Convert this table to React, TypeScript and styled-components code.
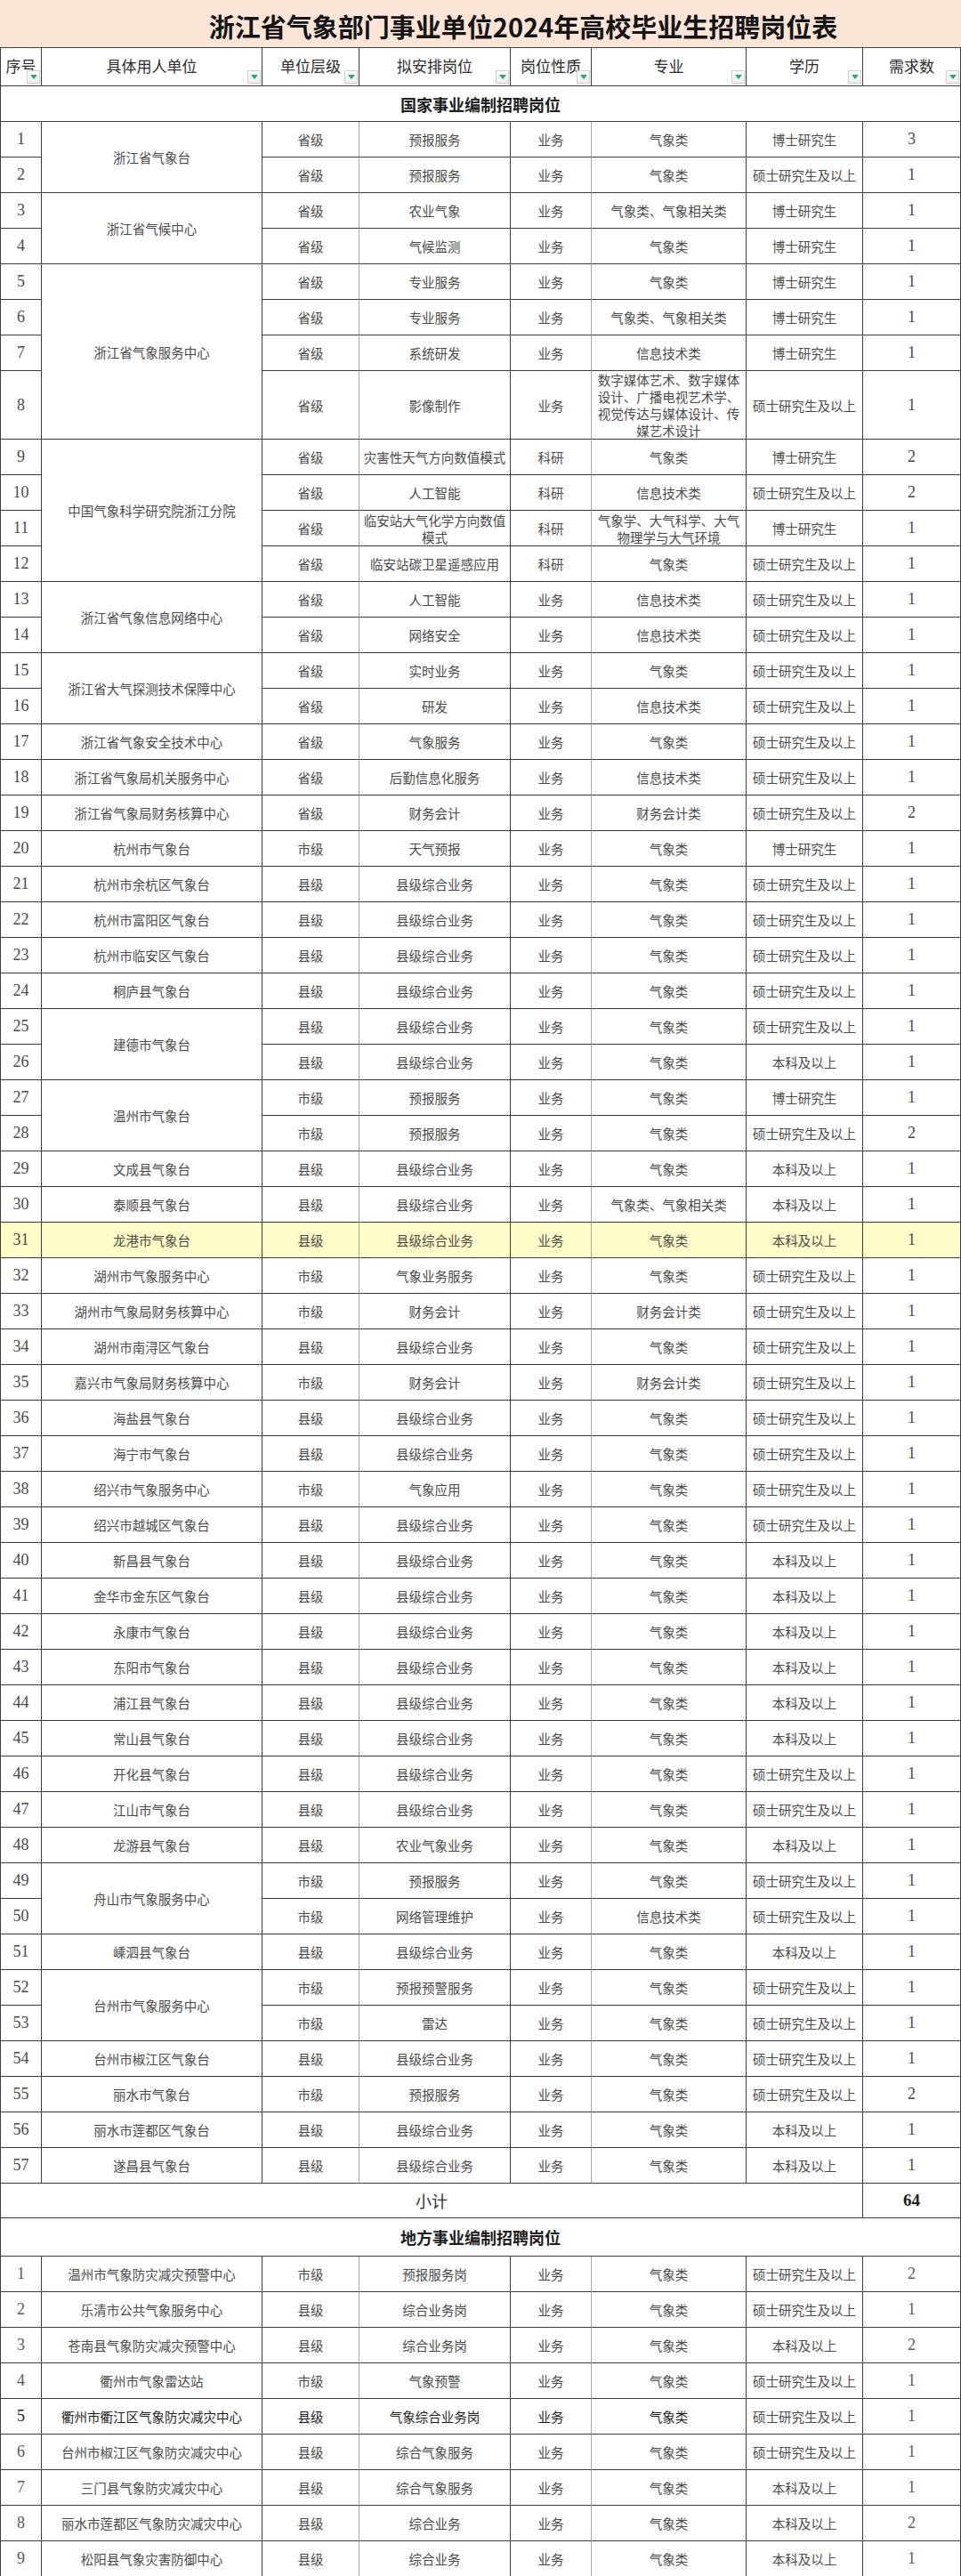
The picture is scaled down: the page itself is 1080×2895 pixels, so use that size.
import React from "react";
import styled, { createGlobalStyle } from "styled-components";

const GlobalStyle = createGlobalStyle`
  html, body { margin: 0; padding: 0; background: #ffffff; }
  body { font-family: "Noto Sans CJK SC", "Noto Sans", sans-serif; }
`;

type Row = {
  no: number;
  unit?: string;
  span?: number;
  level: string;
  post: string;
  nature: string;
  major: string;
  edu: string;
  count: number;
  tall?: boolean;
  highlight?: boolean;
  dark?: boolean;
};

const L = "省级";
const S = "市级";
const X = "县级";
const YW = "业务";
const KY = "科研";
const QX = "气象类";
const XX = "信息技术类";
const CW = "财务会计类";
const BS = "博士研究生";
const SS = "硕士研究生及以上";
const BK = "本科及以上";
const ZH = "县级综合业务";

const national: Row[] = [
  { no: 1, unit: "浙江省气象台", span: 2, level: L, post: "预报服务", nature: YW, major: QX, edu: BS, count: 3 },
  { no: 2, level: L, post: "预报服务", nature: YW, major: QX, edu: SS, count: 1 },
  { no: 3, unit: "浙江省气候中心", span: 2, level: L, post: "农业气象", nature: YW, major: "气象类、气象相关类", edu: BS, count: 1 },
  { no: 4, level: L, post: "气候监测", nature: YW, major: QX, edu: BS, count: 1 },
  { no: 5, unit: "浙江省气象服务中心", span: 4, level: L, post: "专业服务", nature: YW, major: QX, edu: BS, count: 1 },
  { no: 6, level: L, post: "专业服务", nature: YW, major: "气象类、气象相关类", edu: BS, count: 1 },
  { no: 7, level: L, post: "系统研发", nature: YW, major: XX, edu: BS, count: 1 },
  { no: 8, level: L, post: "影像制作", nature: YW, major: "数字媒体艺术、数字媒体设计、广播电视艺术学、视觉传达与媒体设计、传媒艺术设计", edu: SS, count: 1, tall: true },
  { no: 9, unit: "中国气象科学研究院浙江分院", span: 4, level: L, post: "灾害性天气方向数值模式", nature: KY, major: QX, edu: BS, count: 2 },
  { no: 10, level: L, post: "人工智能", nature: KY, major: XX, edu: SS, count: 2 },
  { no: 11, level: L, post: "临安站大气化学方向数值模式", nature: KY, major: "气象学、大气科学、大气物理学与大气环境", edu: BS, count: 1 },
  { no: 12, level: L, post: "临安站碳卫星遥感应用", nature: KY, major: QX, edu: SS, count: 1 },
  { no: 13, unit: "浙江省气象信息网络中心", span: 2, level: L, post: "人工智能", nature: YW, major: XX, edu: SS, count: 1 },
  { no: 14, level: L, post: "网络安全", nature: YW, major: XX, edu: SS, count: 1 },
  { no: 15, unit: "浙江省大气探测技术保障中心", span: 2, level: L, post: "实时业务", nature: YW, major: QX, edu: SS, count: 1 },
  { no: 16, level: L, post: "研发", nature: YW, major: XX, edu: SS, count: 1 },
  { no: 17, unit: "浙江省气象安全技术中心", level: L, post: "气象服务", nature: YW, major: QX, edu: SS, count: 1 },
  { no: 18, unit: "浙江省气象局机关服务中心", level: L, post: "后勤信息化服务", nature: YW, major: XX, edu: SS, count: 1 },
  { no: 19, unit: "浙江省气象局财务核算中心", level: L, post: "财务会计", nature: YW, major: CW, edu: SS, count: 2 },
  { no: 20, unit: "杭州市气象台", level: S, post: "天气预报", nature: YW, major: QX, edu: BS, count: 1 },
  { no: 21, unit: "杭州市余杭区气象台", level: X, post: ZH, nature: YW, major: QX, edu: SS, count: 1 },
  { no: 22, unit: "杭州市富阳区气象台", level: X, post: ZH, nature: YW, major: QX, edu: SS, count: 1 },
  { no: 23, unit: "杭州市临安区气象台", level: X, post: ZH, nature: YW, major: QX, edu: SS, count: 1 },
  { no: 24, unit: "桐庐县气象台", level: X, post: ZH, nature: YW, major: QX, edu: SS, count: 1 },
  { no: 25, unit: "建德市气象台", span: 2, level: X, post: ZH, nature: YW, major: QX, edu: SS, count: 1 },
  { no: 26, level: X, post: ZH, nature: YW, major: QX, edu: BK, count: 1 },
  { no: 27, unit: "温州市气象台", span: 2, level: S, post: "预报服务", nature: YW, major: QX, edu: BS, count: 1 },
  { no: 28, level: S, post: "预报服务", nature: YW, major: QX, edu: SS, count: 2 },
  { no: 29, unit: "文成县气象台", level: X, post: ZH, nature: YW, major: QX, edu: BK, count: 1 },
  { no: 30, unit: "泰顺县气象台", level: X, post: ZH, nature: YW, major: "气象类、气象相关类", edu: BK, count: 1 },
  { no: 31, unit: "龙港市气象台", level: X, post: ZH, nature: YW, major: QX, edu: BK, count: 1, highlight: true },
  { no: 32, unit: "湖州市气象服务中心", level: S, post: "气象业务服务", nature: YW, major: QX, edu: SS, count: 1 },
  { no: 33, unit: "湖州市气象局财务核算中心", level: S, post: "财务会计", nature: YW, major: CW, edu: SS, count: 1 },
  { no: 34, unit: "湖州市南浔区气象台", level: X, post: ZH, nature: YW, major: QX, edu: SS, count: 1 },
  { no: 35, unit: "嘉兴市气象局财务核算中心", level: S, post: "财务会计", nature: YW, major: CW, edu: SS, count: 1 },
  { no: 36, unit: "海盐县气象台", level: X, post: ZH, nature: YW, major: QX, edu: SS, count: 1 },
  { no: 37, unit: "海宁市气象台", level: X, post: ZH, nature: YW, major: QX, edu: SS, count: 1 },
  { no: 38, unit: "绍兴市气象服务中心", level: S, post: "气象应用", nature: YW, major: QX, edu: SS, count: 1 },
  { no: 39, unit: "绍兴市越城区气象台", level: X, post: ZH, nature: YW, major: QX, edu: SS, count: 1 },
  { no: 40, unit: "新昌县气象台", level: X, post: ZH, nature: YW, major: QX, edu: BK, count: 1 },
  { no: 41, unit: "金华市金东区气象台", level: X, post: ZH, nature: YW, major: QX, edu: BK, count: 1 },
  { no: 42, unit: "永康市气象台", level: X, post: ZH, nature: YW, major: QX, edu: BK, count: 1 },
  { no: 43, unit: "东阳市气象台", level: X, post: ZH, nature: YW, major: QX, edu: BK, count: 1 },
  { no: 44, unit: "浦江县气象台", level: X, post: ZH, nature: YW, major: QX, edu: BK, count: 1 },
  { no: 45, unit: "常山县气象台", level: X, post: ZH, nature: YW, major: QX, edu: BK, count: 1 },
  { no: 46, unit: "开化县气象台", level: X, post: ZH, nature: YW, major: QX, edu: SS, count: 1 },
  { no: 47, unit: "江山市气象台", level: X, post: ZH, nature: YW, major: QX, edu: SS, count: 1 },
  { no: 48, unit: "龙游县气象台", level: X, post: "农业气象业务", nature: YW, major: QX, edu: BK, count: 1 },
  { no: 49, unit: "舟山市气象服务中心", span: 2, level: S, post: "预报服务", nature: YW, major: QX, edu: SS, count: 1 },
  { no: 50, level: S, post: "网络管理维护", nature: YW, major: XX, edu: SS, count: 1 },
  { no: 51, unit: "嵊泗县气象台", level: X, post: ZH, nature: YW, major: QX, edu: BK, count: 1 },
  { no: 52, unit: "台州市气象服务中心", span: 2, level: S, post: "预报预警服务", nature: YW, major: QX, edu: SS, count: 1 },
  { no: 53, level: S, post: "雷达", nature: YW, major: QX, edu: SS, count: 1 },
  { no: 54, unit: "台州市椒江区气象台", level: X, post: ZH, nature: YW, major: QX, edu: SS, count: 1 },
  { no: 55, unit: "丽水市气象台", level: S, post: "预报服务", nature: YW, major: QX, edu: SS, count: 2 },
  { no: 56, unit: "丽水市莲都区气象台", level: X, post: ZH, nature: YW, major: QX, edu: BK, count: 1 },
  { no: 57, unit: "遂昌县气象台", level: X, post: ZH, nature: YW, major: QX, edu: BK, count: 1 },
];

const local: Row[] = [
  { no: 1, unit: "温州市气象防灾减灾预警中心", level: S, post: "预报服务岗", nature: YW, major: QX, edu: SS, count: 2 },
  { no: 2, unit: "乐清市公共气象服务中心", level: X, post: "综合业务岗", nature: YW, major: QX, edu: SS, count: 1 },
  { no: 3, unit: "苍南县气象防灾减灾预警中心", level: X, post: "综合业务岗", nature: YW, major: QX, edu: BK, count: 2 },
  { no: 4, unit: "衢州市气象雷达站", level: S, post: "气象预警", nature: YW, major: QX, edu: SS, count: 1 },
  { no: 5, unit: "衢州市衢江区气象防灾减灾中心", level: X, post: "气象综合业务岗", nature: YW, major: QX, edu: SS, count: 1, dark: true },
  { no: 6, unit: "台州市椒江区气象防灾减灾中心", level: X, post: "综合气象服务", nature: YW, major: QX, edu: SS, count: 1 },
  { no: 7, unit: "三门县气象防灾减灾中心", level: X, post: "综合气象服务", nature: YW, major: QX, edu: BK, count: 1 },
  { no: 8, unit: "丽水市莲都区气象防灾减灾中心", level: X, post: "综合业务", nature: YW, major: QX, edu: BK, count: 2 },
  { no: 9, unit: "松阳县气象灾害防御中心", level: X, post: "综合业务", nature: YW, major: QX, edu: BK, count: 1 },
];

const columns = [
  { label: "序号", width: 46 },
  { label: "具体用人单位", width: 248 },
  { label: "单位层级", width: 109 },
  { label: "拟安排岗位", width: 170 },
  { label: "岗位性质", width: 91 },
  { label: "专业", width: 174 },
  { label: "学历", width: 131 },
  { label: "需求数", width: 110 },
];

const LINE = "#3e3e3e";
const SOFT = "#a6a6a6";

const Page = styled.div`
  width: 1080px;
  background: #ffffff;
`;

const TitleBar = styled.header`
  height: 53px;
  box-sizing: border-box;
  background: #fce4d6;
  display: flex;
  align-items: center;
  justify-content: center;
  padding: 6px 0 0 96px;
`;

const Title = styled.h1`
  margin: 0;
  font-family: "Noto Sans CJK SC", sans-serif;
  font-size: 29px;
  font-weight: 700;
  color: #141414;
  letter-spacing: 0;
  line-height: 1;
`;

const Sheet = styled.table`
  width: 1080px;
  table-layout: fixed;
  border-collapse: separate;
  border-spacing: 0;
  border-top: 1px solid ${LINE};
  border-left: 1px solid ${LINE};
  box-sizing: border-box;
`;

const Col = styled.col<{ $w: number }>`
  width: ${(p) => p.$w}px;
`;

const HeadRow = styled.tr`
  height: 43px;
`;

const HeadCell = styled.th`
  position: relative;
  padding: 0 2px 4px;
  border-right: 1px solid ${LINE};
  border-bottom: 1px solid ${LINE};
  font-family: "Noto Sans CJK SC", sans-serif;
  font-size: 17px;
  font-weight: 400;
  color: #2c2c2c;
  text-align: center;
  vertical-align: middle;
  white-space: nowrap;
`;

const FilterButton = styled.span`
  position: absolute;
  right: 1px;
  bottom: 2px;
  width: 15px;
  height: 15px;
  box-sizing: border-box;
  border: 1px solid #cfcfcf;
  background: linear-gradient(#ffffff, #eeeeee);
  display: flex;
  align-items: center;
  justify-content: center;
`;

const BodyRow = styled.tr<{ $h: number; $highlight?: boolean }>`
  height: ${(p) => p.$h}px;
  background: ${(p) => (p.$highlight ? "#fffdc8" : "transparent")};
`;

const Cell = styled.td<{ $soft?: boolean; $num?: boolean; $dark?: boolean; $muted?: boolean }>`
  padding: 0 4px;
  border-right: 1px solid ${(p) => (p.$soft ? SOFT : LINE)};
  border-bottom: 1px solid ${LINE};
  text-align: center;
  vertical-align: middle;
  font-family: ${(p) =>
    p.$num ? `"Liberation Serif", "Noto Sans CJK SC", serif` : `"Noto Sans CJK SC", sans-serif`};
  font-size: ${(p) => (p.$num ? "18px" : "14.5px")};
  line-height: 19px;
  font-weight: 400;
  color: ${(p) => (p.$dark ? "#1e1e1e" : p.$muted ? "#5a5a5a" : "#4a4a4a")};
  word-break: break-all;
`;

const SectionRow = styled.tr<{ $h: number }>`
  height: ${(p) => p.$h}px;
`;

const SectionCell = styled.td`
  border-right: 1px solid ${LINE};
  border-bottom: 1px solid ${LINE};
  text-align: center;
  vertical-align: middle;
  font-family: "Noto Sans CJK SC", sans-serif;
  font-size: 18px;
  font-weight: 700;
  color: #1e1e1e;
`;

const SubtotalLabel = styled.td`
  border-right: 1px solid ${LINE};
  border-bottom: 1px solid ${LINE};
  text-align: center;
  vertical-align: middle;
  font-family: "Noto Sans CJK SC", sans-serif;
  font-size: 18px;
  font-weight: 400;
  color: #333333;
`;

const SubtotalValue = styled.td`
  border-right: 1px solid ${LINE};
  border-bottom: 1px solid ${LINE};
  text-align: center;
  vertical-align: middle;
  font-family: "Liberation Serif", serif;
  font-size: 19px;
  font-weight: 700;
  color: #1e1e1e;
`;

const FilterArrow = () => (
  <svg width="8" height="5" viewBox="0 0 8 5" aria-hidden="true">
    <path d="M0 0 H8 L4 5 Z" fill="#25a874" />
  </svg>
);

const DataRow: React.FC<{ row: Row; muted?: boolean }> = ({ row, muted }) => (
  <BodyRow $h={row.tall ? 75 : 40} $highlight={row.highlight}>
    <Cell $num $muted={muted} $dark={row.dark}>
      {row.no}
    </Cell>
    {row.unit !== undefined && (
      <Cell rowSpan={row.span ?? 1} $dark={row.dark}>
        {row.unit}
      </Cell>
    )}
    <Cell $soft $dark={row.dark}>
      {row.level}
    </Cell>
    <Cell $dark={row.dark}>{row.post}</Cell>
    <Cell $soft $dark={row.dark}>
      {row.nature}
    </Cell>
    <Cell $dark={row.dark}>{row.major}</Cell>
    <Cell>{row.edu}</Cell>
    <Cell $num $muted={muted}>
      {row.count}
    </Cell>
  </BodyRow>
);

export default function App() {
  const subtotal = national.reduce((sum, r) => sum + r.count, 0);
  return (
    <Page>
      <GlobalStyle />
      <TitleBar>
        <Title>浙江省气象部门事业单位2024年高校毕业生招聘岗位表</Title>
      </TitleBar>
      <Sheet>
        <colgroup>
          {columns.map((c) => (
            <Col key={c.label} $w={c.width} />
          ))}
        </colgroup>
        <thead>
          <HeadRow>
            {columns.map((c) => (
              <HeadCell key={c.label}>
                {c.label}
                <FilterButton>
                  <FilterArrow />
                </FilterButton>
              </HeadCell>
            ))}
          </HeadRow>
        </thead>
        <tbody>
          <SectionRow $h={40}>
            <SectionCell colSpan={8}>国家事业编制招聘岗位</SectionCell>
          </SectionRow>
          {national.map((r) => (
            <DataRow key={`n${r.no}`} row={r} />
          ))}
          <SectionRow $h={39}>
            <SubtotalLabel colSpan={7}>小计</SubtotalLabel>
            <SubtotalValue>{subtotal}</SubtotalValue>
          </SectionRow>
          <SectionRow $h={43}>
            <SectionCell colSpan={8}>地方事业编制招聘岗位</SectionCell>
          </SectionRow>
          {local.map((r) => (
            <DataRow key={`l${r.no}`} row={r} muted />
          ))}
        </tbody>
      </Sheet>
    </Page>
  );
}
